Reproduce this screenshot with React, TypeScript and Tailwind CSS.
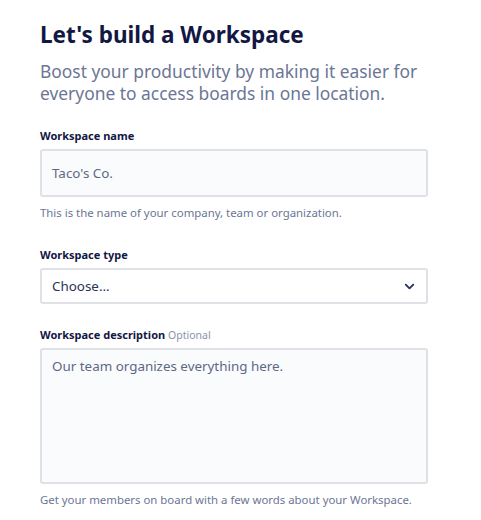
import { ChevronDown } from 'lucide-react';

const App = () => {
  return (
    <div className="min-h-[520px] bg-white px-10 pt-[20px] font-['Noto_Sans',sans-serif]">
      <h1 className="text-[22.5px] leading-[30px] font-bold text-[#121743]">Let's build a Workspace</h1>
      <p className="mt-[10px] text-[17.4px] leading-[22px] text-[#6b7695] w-[400px]">
        Boost your productivity by making it easier for everyone to access boards in one location.
      </p>

      <div className="mt-[24px] w-[388px]">
        <label className="block text-[11px] leading-[16px] font-bold text-[#121743]">Workspace name</label>
        <div className="mt-[5px] h-[48px] rounded-[3px] border-2 border-[#dfe1e6] bg-[#fafbfc] px-[10px] flex items-center text-[13.4px] text-[#5e6886]">
          Taco's Co.
        </div>
        <p className="mt-[8px] text-[11.4px] leading-[16px] text-[#6b7695]">This is the name of your company, team or organization.</p>

        <label className="mt-[26px] block text-[11px] leading-[16px] font-bold text-[#121743]">Workspace type</label>
        <div className="mt-[5px] h-[36px] rounded-[3px] border-2 border-[#dfe1e6] bg-white pl-[10px] pr-[9px] flex items-center justify-between text-[13.4px] text-[#2b3358]">
          <span>Choose…</span>
          <ChevronDown size={15} strokeWidth={3} className="text-[#2b3358]" />
        </div>

        <label className="mt-[23px] block text-[11px] leading-[16px] text-[#121743]">
          <span className="font-bold">Workspace description</span>{' '}
          <span className="text-[10.5px] text-[#8a93ab]">Optional</span>
        </label>
        <div className="mt-[5px] h-[136px] rounded-[3px] border-2 border-[#dfe1e6] bg-[#fafbfc] px-[10px] pt-[6px] text-[13.4px] leading-[20px] text-[#5e6886]">
          Our team organizes everything here.
        </div>
        <p className="mt-[8px] text-[11.4px] leading-[16px] text-[#6b7695]">Get your members on board with a few words about your Workspace.</p>
      </div>
    </div>
  );
};

export default App;
